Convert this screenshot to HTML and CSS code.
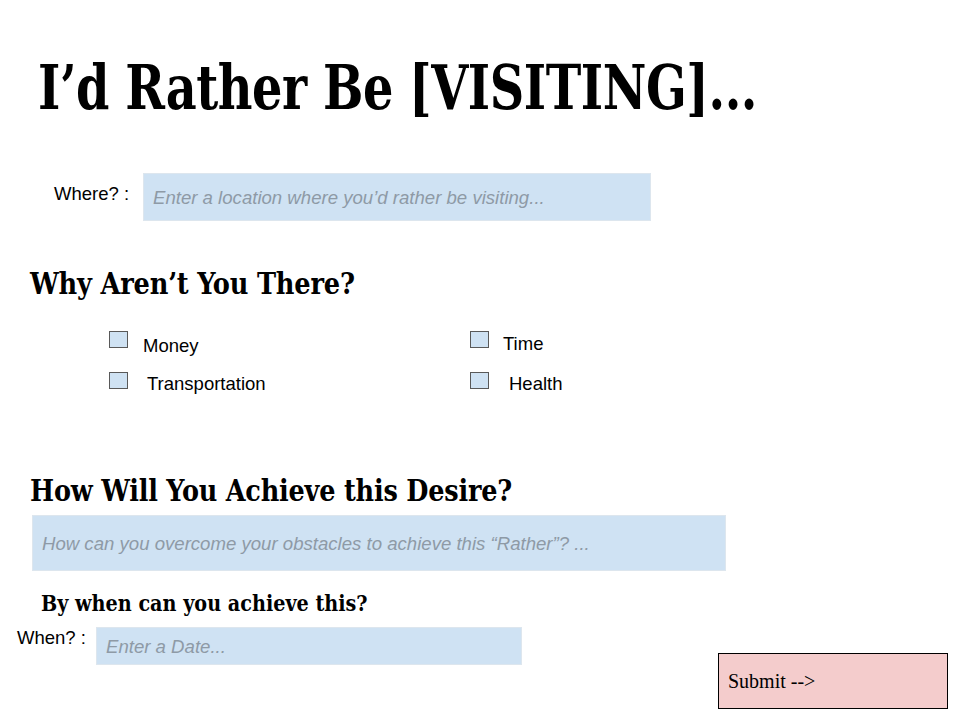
FILE: index.html
```html
<!DOCTYPE html>
<html lang="en">
<head>
<meta charset="utf-8">
<title>I'd Rather Be Visiting</title>
<link rel="stylesheet" href="styles.css">
</head>
<body>
<main class="page">
  <h1 class="title"><span class="squeeze sq-title">I’d Rather Be [VISITING]...</span></h1>

  <div class="where-row">
    <span class="field-label">Where? :</span>
    <div class="field field-where"><span class="placeholder">Enter a location where you’d rather be visiting...</span></div>
  </div>

  <h2 class="section why"><span class="squeeze sq-why">Why Aren’t You There?</span></h2>

  <div class="checks">
    <div class="check"><span class="box"></span><span class="check-label money">Money</span></div>
    <div class="check"><span class="box"></span><span class="check-label time">Time</span></div>
    <div class="check"><span class="box"></span><span class="check-label transport">Transportation</span></div>
    <div class="check"><span class="box"></span><span class="check-label health">Health</span></div>
  </div>

  <h2 class="section how"><span class="squeeze sq-how">How Will You Achieve this Desire?</span></h2>
  <div class="field field-how"><span class="placeholder">How can you overcome your obstacles to achieve this “Rather”? ...</span></div>

  <h3 class="sub"><span class="squeeze sq-sub">By when can you achieve this?</span></h3>
  <div class="bottom">
    <div class="when-row">
      <span class="field-label when-label">When? :</span>
      <div class="field field-when"><span class="placeholder">Enter a Date...</span></div>
    </div>
    <div class="submit">Submit --&gt;</div>
  </div>
</main>
</body>
</html>
```

FILE: styles.css
```css
* { box-sizing: border-box; }
html, body { margin: 0; padding: 0; background: #ffffff; }
body { width: 960px; height: 720px; overflow: hidden; font-family: "Liberation Sans", Arial, sans-serif; color: #000; }

.page { padding: 0; }

.squeeze { display: inline-block; white-space: nowrap; transform-origin: 0 50%; }
.sq-title { transform: scaleX(0.856); }
.sq-why { transform: scaleX(0.95); }
.sq-how { transform: scaleX(0.945); }
.sq-sub { transform: scaleX(0.97); }

.title {
  margin: 0;
  padding: 52px 0 0 38px;
  font-family: "DejaVu Serif", serif;
  font-stretch: condensed;
  font-weight: bold;
  font-size: 62px;
  line-height: 72px;
  letter-spacing: -0.5px;
}

.where-row { display: flex; align-items: flex-start; margin-top: 49px; padding-left: 54px; }
.field-label { font-size: 18.5px; line-height: 20px; padding-top: 11px; width: 89px; flex: none; }

.field {
  background: #cfe2f3;
  border: 1px solid #dde6ee;
  color: #8e9aa6;
  font-style: italic;
  display: flex;
  align-items: center;
}
.placeholder { font-size: 18.6px; line-height: 22px; }
.field-where { width: 508px; height: 48px; padding-left: 9px; padding-top: 2px; }

.section {
  margin: 0;
  font-family: "DejaVu Serif", serif;
  font-stretch: condensed;
  font-weight: bold;
  font-size: 30px;
  line-height: 34px;
  padding-left: 30px;
  letter-spacing: -0.2px;
}
.why { margin-top: 46px; }

.checks {
  display: grid;
  grid-template-columns: 361px 200px;
  row-gap: 23px;
  margin-top: 30px;
  padding-left: 109px;
}
.check { display: flex; align-items: flex-start; height: 18px; }
.box { width: 19px; height: 17px; background: #cfe2f3; border: 1px solid #595959; flex: none; }
.check-label { font-size: 18.5px; line-height: 20px; }
.money { margin-left: 15px; margin-top: 5px; }
.time { margin-left: 14px; margin-top: 3px; }
.transport { margin-left: 19px; margin-top: 2px; }
.health { margin-left: 20px; margin-top: 2px; }

.how { margin-top: 84px; }
.field-how { width: 694px; height: 56px; margin: 7px 0 0 32px; padding-left: 9px; padding-top: 2px; }

.sub {
  margin: 18px 0 0 41px;
  font-family: "DejaVu Serif", serif;
  font-stretch: condensed;
  font-weight: bold;
  font-size: 22px;
  line-height: 28px;
}

.bottom { display: flex; justify-content: space-between; align-items: flex-start; padding: 0 12px 0 17px; margin-top: 6px; }
.when-row { display: flex; align-items: flex-start; }
.when-label { width: 79px; padding-top: 5px; }
.field-when { width: 426px; height: 38px; padding-left: 9px; padding-top: 2px; margin-top: 4px; }

.submit {
  margin-top: 30px;
  width: 230px;
  height: 56px;
  background: #f4cccc;
  border: 1px solid #000;
  font-family: "Liberation Serif", "Times New Roman", serif;
  font-size: 20px;
  padding: 16px 0 0 9px;
  line-height: 22px;
}
```
